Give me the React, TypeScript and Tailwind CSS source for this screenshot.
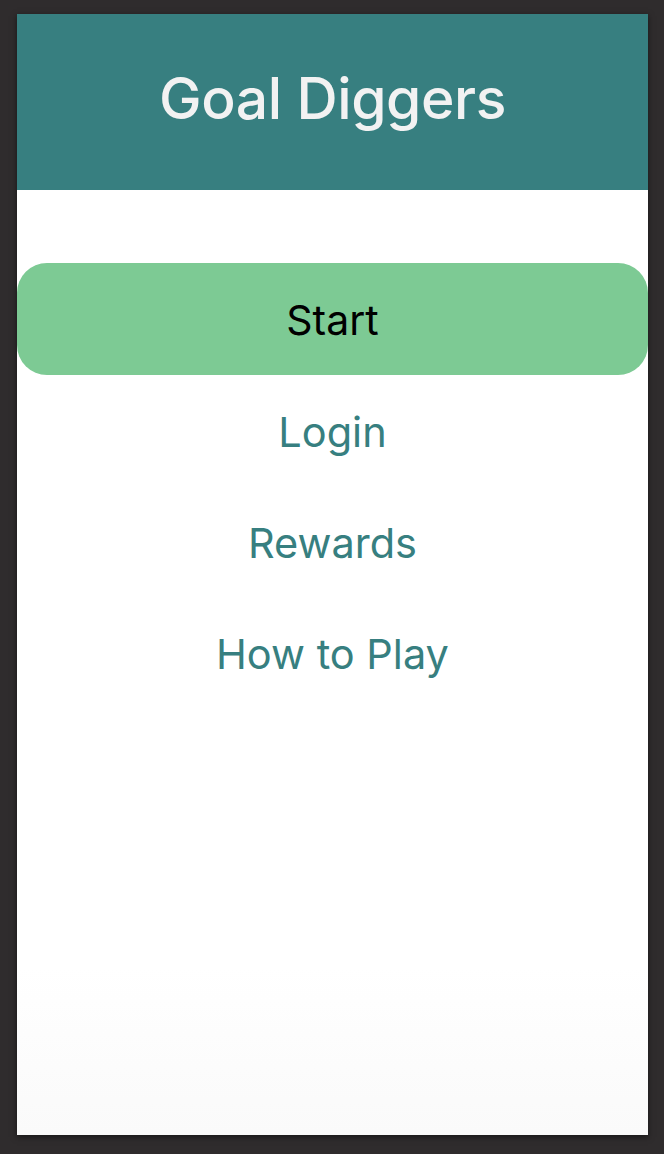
export default function App() {
  const links = ["Login", "Rewards", "How to Play"];

  return (
    <div className="h-[1154px] w-full bg-[#2f2c2d] pl-[17px] pr-[16px] pt-[14px] pb-[19px] font-['Inter',sans-serif]">
      <div className="flex h-full flex-col bg-gradient-to-b from-white from-85% to-[#fafafa] shadow-[0_2px_6px_rgba(0,0,0,0.5)]">
        <header className="flex h-[176px] items-center justify-center bg-[#377f80] pb-[6px]">
          <h1 className="text-[57px] font-medium tracking-[-0.4px] text-[#f2f2f2]">Goal Diggers</h1>
        </header>

        <nav className="mt-[73px] flex flex-col">
          <button className="flex h-[112px] items-center justify-center rounded-[30px] bg-[#7dca94] pt-[4px] text-[41px] text-black">
            Start
          </button>
          {links.map((l) => (
            <a
              key={l}
              href="#"
              className="flex h-[111px] items-center justify-center pt-[4px] text-[41.5px] text-[#377f80]"
            >
              {l}
            </a>
          ))}
        </nav>
      </div>
    </div>
  );
}
